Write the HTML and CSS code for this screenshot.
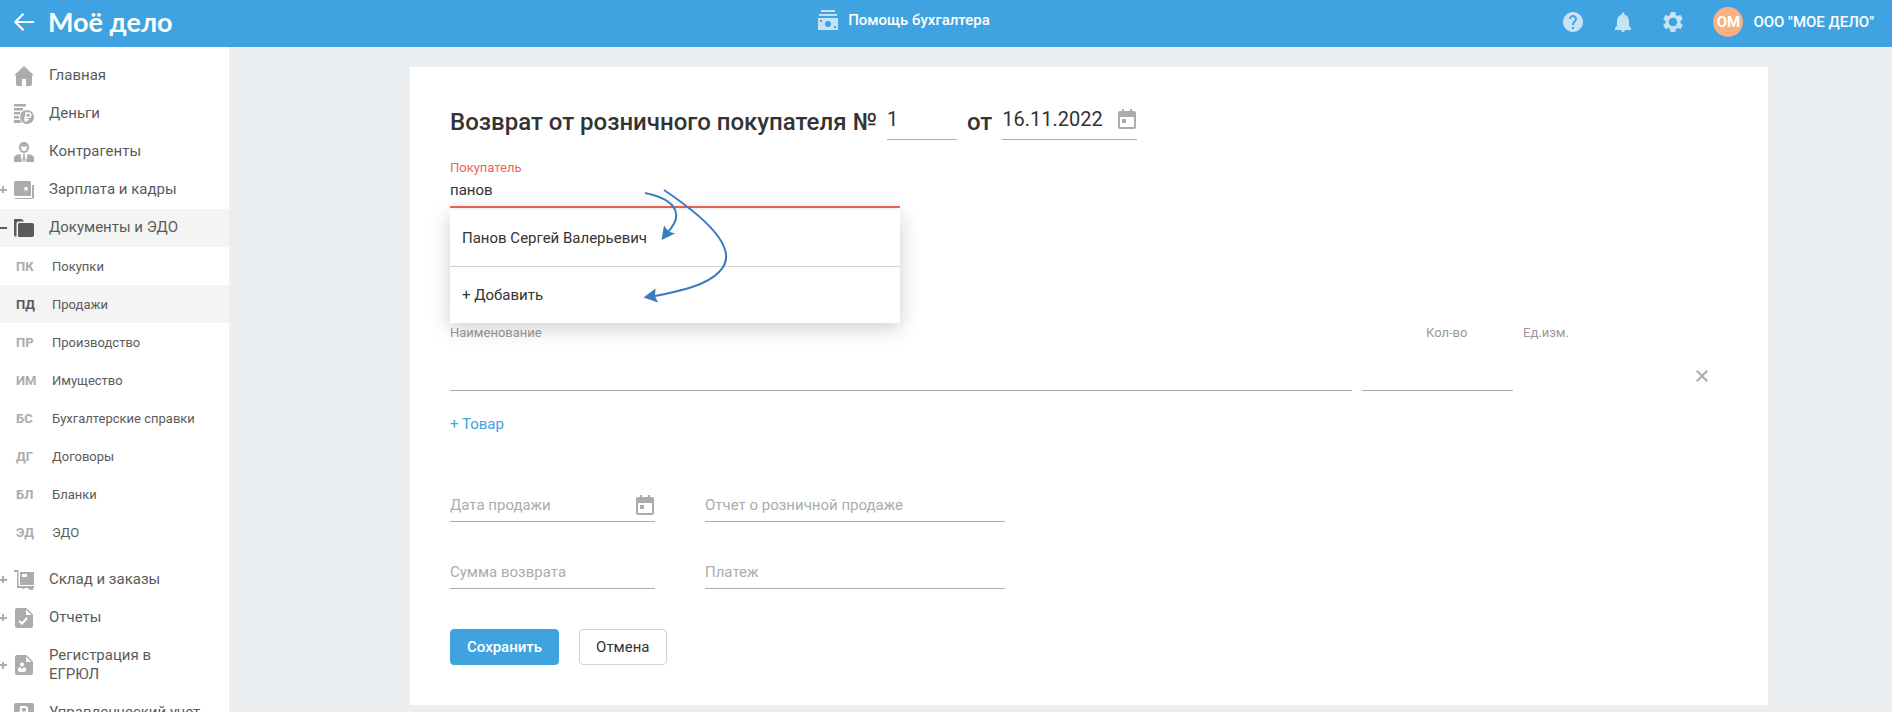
FILE: index.html
```html
<!DOCTYPE html>
<html lang="ru">
<head>
  <meta charset="utf-8">
  <title>Возврат от розничного покупателя</title>
  <link rel="stylesheet" href="styles.css">
</head>
<body>
  <header class="header">
    <a class="back" href="#" aria-label="Назад">
      <svg width="20" height="18" viewBox="0 0 20 18" fill="none" stroke="#fff" stroke-width="2"><path d="M20 9H1M9.500 .7L1.200 9l8.300 8.300"/></svg>
    </a>
    <a class="logo" href="#">Моё дело</a>
    <a class="help" href="#">
      <svg width="20" height="20" viewBox="0 0 20 20"><path fill="#c5e3f5" fill-rule="evenodd" d="M3 0h14v2H3zM1 4h18v2H1zM0 8h20v12H0zM2 10v2h2v-2zM16 16v2h2v-2zM10 11a3 3 0 1 0 0 6a3 3 0 1 0 0-6z"/></svg>
      Помощь бухгалтера
    </a>
    <div class="tools">
      <button class="tool" aria-label="Справка">
        <svg width="20" height="20" viewBox="2 2 20 20"><path d="M12 2C6.480 2 2 6.480 2 12s4.480 10 10 10 10-4.480 10-10S17.520 2 12 2zm1 17h-2v-2h2v2zm2.070-7.750l-.9.920C13.450 12.900 13 13.500 13 15h-2v-.5c0-1.100.450-2.100 1.170-2.830l1.240-1.260c.370-.360.590-.860.590-1.410 0-1.100-.9-2-2-2s-2 .9-2 2H8c0-2.210 1.790-4 4-4s4 1.790 4 4c0 .880-.360 1.680-.930 2.250z"/></svg>
      </button>
      <button class="tool" aria-label="Уведомления">
        <svg width="20" height="20" viewBox="2 2 20 20"><path d="M12 22c1.100 0 2-.9 2-2h-4c0 1.100.9 2 2 2zm6-6v-5c0-3.070-1.630-5.640-4.500-6.320V4c0-.830-.670-1.500-1.500-1.500s-1.500.670-1.500 1.500v.680C7.640 5.360 6 7.920 6 11v5l-2 2v2h16v-2l-2-2z"/></svg>
      </button>
      <button class="tool" aria-label="Настройки">
        <svg width="20" height="20" viewBox="2 2 20 20"><path d="M19.430 12.980c.040-.320.070-.640.070-.980s-.030-.660-.070-.980l2.110-1.650c.190-.150.240-.420.120-.640l-2-3.460c-.120-.220-.390-.3-.610-.220l-2.490 1c-.520-.4-1.080-.730-1.690-.980l-.380-2.650C14.460 2.180 14.250 2 14 2h-4c-.250 0-.460.180-.490.420l-.380 2.650c-.610.250-1.170.590-1.690.980l-2.490-1c-.230-.090-.490 0-.610.220l-2 3.460c-.130.220-.070.490.120.640l2.110 1.650c-.040.320-.070.650-.070.980s.030.660.070.980l-2.110 1.650c-.190.150-.240.420-.120.640l2 3.460c.120.220.390.3.610.220l2.490-1c.520.4 1.080.730 1.690.980l.380 2.650c.030.240.240.420.490.420h4c.250 0 .460-.180.490-.420l.380-2.650c.610-.250 1.170-.590 1.690-.980l2.490 1c.230.090.490 0 .610-.220l2-3.460c.120-.220.070-.490-.120-.640l-2.110-1.650zM12 16.300a4.300 4.300 0 1 1 0-8.600 4.300 4.300 0 0 1 0 8.600z"/></svg>
      </button>
      <a class="account" href="#"><span class="avatar">ОМ</span>ООО "МОЕ ДЕЛО"</a>
    </div>
  </header>

  <div class="page">
    <nav class="sidebar">
      <a class="item" href="#">
        <svg class="icon" viewBox="0 0 20 20"><path d="M10 0L0 9.500h2V18c0 1.200.8 2 2 2h4v-7h4v7h4c1.200 0 2-.8 2-2V9.500h2z"/></svg>
        <span>Главная</span>
      </a>
      <a class="item" href="#">
        <svg class="icon" viewBox="0 0 20 20"><path d="M0 0h12v2.500H0zM0 4h9v2.500H0zM0 8h6.500L5.500 10.500H0zM0 12h5v2.500H0zM0 16h6l1.500 3H0z"/><circle cx="13" cy="13" r="7"/><path fill="none" stroke="#fff" stroke-width="1.500" d="M12 18V9h2.500a2.200 2.200 0 0 1 0 4.500H10M10 15.700h5"/></svg>
        <span>Деньги</span>
      </a>
      <a class="item" href="#">
        <svg class="icon" viewBox="0 0 20 20"><path fill-rule="evenodd" d="M10 0c3 0 5 2 5 5s-2 6-5 6-5-3-5-6 2-5 5-5zM7 4c0 3 1 5 3 5s3-2 3-5c-2 1-4 1-6 0z"/><path d="M0 20v-4c0-2.500 3-3.500 6.500-4L8 20zM20 20v-4c0-2.500-3-3.500-6.500-4L12 20zM8.500 12h3l-.8 2 .8 4-1.500 2-1.500-2 .8-4z"/></svg>
        <span>Контрагенты</span>
      </a>
      <a class="item has-children" href="#">
        <svg class="icon" viewBox="0 0 20 20"><path fill-rule="evenodd" d="M2 1h13c1.200 0 2 .6 2 2v2h-6c-1.200 0-2 .8-2 2v4c0 1.200.8 2 2 2h6v3H2c-1.200 0-2-.6-2-2V3c0-1.400.8-2 2-2zM11 5h6v8h-6c-1.200 0-2-.8-2-2V7c0-1.200.8-2 2-2zM10.500 7v3.500h3V7zM18 5h2v12c0 1.200-.8 2-2 2H2c-.8 0-1.400-.4-1.700-1H18z"/></svg>
        <span>Зарплата и кадры</span>
      </a>
      <a class="item has-children open" href="#">
        <svg class="icon" viewBox="0 0 20 20"><path d="M0 1.500C0 1 .5 1 1 1h6.500l3 2.500H4.500C3 3.500 2.500 4.500 2.500 6v12.500H2C.8 18.500 0 18 0 16.500zM5.500 5H18c1.200 0 2 .8 2 2v10c0 1.200-.8 2-2 2H5.500c-1 0-1.500-.5-1.500-1.500v-11C4 5.500 4.500 5 5.500 5z"/></svg>
        <span>Документы и ЭДО</span>
      </a>
      <div class="submenu">
        <a class="subitem" href="#"><b>ПК</b>Покупки</a>
        <a class="subitem active" href="#"><b>ПД</b>Продажи</a>
        <a class="subitem" href="#"><b>ПР</b>Производство</a>
        <a class="subitem" href="#"><b>ИМ</b>Имущество</a>
        <a class="subitem" href="#"><b>БС</b>Бухгалтерские справки</a>
        <a class="subitem" href="#"><b>ДГ</b>Договоры</a>
        <a class="subitem" href="#"><b>БЛ</b>Бланки</a>
        <a class="subitem" href="#"><b>ЭД</b>ЭДО</a>
      </div>
      <a class="item has-children" href="#">
        <svg class="icon" viewBox="0 0 20 20"><path fill-rule="evenodd" d="M0 0h4.500v16H20v2h-1a1.600 1.600 0 0 1-3 1.500H15L14 18h-3a1.600 1.600 0 0 1-3 0H3V2H0zM6 2h14v13H6zM8 4v3h5V4z"/></svg>
        <span>Склад и заказы</span>
      </a>
      <a class="item has-children" href="#">
        <svg class="icon" viewBox="0 0 20 20"><path fill-rule="evenodd" d="M3 0h9.500L19 6.500V18c0 1.200-.8 2-2 2H3c-1.200 0-2-.8-2-2V2C1 .8 1.800 0 3 0zM12 1.500V7h5.500z"/><path fill="none" stroke="#fff" stroke-width="2" d="M5 13l3 2.500 5-5.500"/></svg>
        <span>Отчеты</span>
      </a>
      <a class="item has-children" href="#">
        <svg class="icon" viewBox="0 0 20 20"><path fill-rule="evenodd" d="M3 0h9.500L19 6.500V18c0 1.200-.8 2-2 2H3c-1.200 0-2-.8-2-2V2C1 .8 1.800 0 3 0zM12 1.500V7h5.500z"/><circle cx="8" cy="9.500" r="2" fill="#fff"/><path fill="#fff" d="M4 13l2-1 2 2 2-2 2 1v2.500c0 1-1.500 1.500-4 1.500s-4-.5-4-1.500z"/></svg>
        <span>Регистрация в ЕГРЮЛ</span>
      </a>
      <a class="item" href="#">
        <svg class="icon" viewBox="0 0 20 20"><rect width="20" height="20" rx="2"/><path fill="none" stroke="#fff" stroke-width="2" d="M7 17V4h3.500a2.800 2.800 0 0 1 0 5.600H4.500M4.500 13H11"/></svg>
        <span>Управленческий учет</span>
      </a>
    </nav>

    <main class="main">
      <form class="card">
        <div class="title-row">
          <h1>Возврат от розничного покупателя №</h1>
          <input class="control number" type="text" value="1" aria-label="Номер документа">
          <h1>от</h1>
          <div class="date-field document-date">
            <input class="control" type="text" value="16.11.2022" aria-label="Дата документа">
            <svg class="calendar" viewBox="0 0 18 20"><path fill-rule="evenodd" d="M4 0h2v2h6V0h2v2h2c1.200 0 2 .8 2 2v14c0 1.200-.8 2-2 2H2c-1.200 0-2-.8-2-2V4c0-1.200.8-2 2-2h2zM2 8v10h14V8zM4 10h4v4H4z"/></svg>
          </div>
        </div>

        <div class="customer">
          <label for="customer">Покупатель</label>
          <input id="customer" type="text" value="панов">
          <div class="dropdown">
            <button type="button">Панов Сергей Валерьевич</button>
            <button type="button">+ Добавить</button>
          </div>
          <svg class="arrows" width="90" height="120" viewBox="640 185 90 120">
            <path class="line" d="M645 193C670 198 688 211 667 233M664 190C716 225 739 253 719 272C707 285 681 291 655 296"/>
            <path class="head" d="M661.500 240l2.500-14.500 4.500 6 6.500 2zM643.500 297.500l12-9-.5 7.500 3 6.500z"/>
          </svg>
        </div>

        <table class="goods">
          <thead>
            <tr>
              <th class="col-name">Наименование</th>
              <th class="col-count">Кол-во</th>
              <th class="col-unit">Ед.изм.</th>
              <th class="col-remove"></th>
            </tr>
          </thead>
          <tbody>
            <tr>
              <td><input type="text" aria-label="Наименование"></td>
              <td><input type="text" aria-label="Кол-во"></td>
              <td></td>
              <td>
                <button class="remove" type="button" aria-label="Удалить">
                  <svg width="12" height="12" viewBox="0 0 12 12" fill="none" stroke="#acacac" stroke-width="2"><path d="M.7.7l10.600 10.600M11.300.7L.7 11.300"/></svg>
                </button>
              </td>
            </tr>
          </tbody>
        </table>
        <a class="add" href="#">+ Товар</a>

        <div class="fields">
          <div class="date-field">
            <input class="control" type="text" placeholder="Дата продажи" aria-label="Дата продажи">
            <svg class="calendar" viewBox="0 0 18 20"><path fill-rule="evenodd" d="M4 0h2v2h6V0h2v2h2c1.200 0 2 .8 2 2v14c0 1.200-.8 2-2 2H2c-1.200 0-2-.8-2-2V4c0-1.200.8-2 2-2h2zM2 8v10h14V8zM4 10h4v4H4z"/></svg>
          </div>
          <input class="control" type="text" placeholder="Отчет о розничной продаже" aria-label="Отчет о розничной продаже">
          <input class="control" type="text" placeholder="Сумма возврата" aria-label="Сумма возврата">
          <input class="control" type="text" placeholder="Платеж" aria-label="Платеж">
        </div>

        <div class="buttons">
          <button class="btn primary" type="submit">Сохранить</button>
          <button class="btn" type="button">Отмена</button>
        </div>
      </form>
    </main>
  </div>
</body>
</html>
```
FILE: styles.css
```css
* { box-sizing: border-box; }
body {
  display: flex;
  flex-direction: column;
  height: 100vh;
  margin: 0;
  overflow: hidden;
  background: #ebeff2;
  color: #333;
  font: 15px/20px Roboto, sans-serif;
}
a { color: inherit; text-decoration: none; }
button, input { font: inherit; color: inherit; }
button { cursor: pointer; }
input { outline: none; }

/* Header */
.header {
  display: grid;
  grid-template-columns: 1fr auto 1fr;
  grid-template-areas: "brand help tools";
  flex: none;
  align-items: center;
  height: 47px;
  padding: 0 18px 3px 14px;
  background: #3ea3e0;
  color: #fff;
}
.back {
  grid-area: brand;
  display: flex;
  width: 20px;
}
.logo {
  grid-area: brand;
  justify-self: start;
  margin-left: 34px;
  font: 700 27px/32px Lato, sans-serif;
}
.help {
  grid-area: help;
  display: flex;
  gap: 10px;
  align-items: center;
  padding: 0 80px 4px 0;
  font-weight: 500;
}
.tools {
  grid-area: tools;
  display: flex;
  gap: 30px;
  align-items: center;
  justify-content: flex-end;
}
.tool {
  display: flex;
  padding: 0;
  border: none;
  background: none;
  fill: #c5e3f5;
}
.account {
  display: flex;
  gap: 10px;
  align-items: center;
  font-weight: 500;
}
.avatar {
  width: 30px;
  border-radius: 50%;
  background: #f8b084;
  font-weight: 700;
  line-height: 30px;
  text-align: center;
}

/* Sidebar */
.page {
  display: flex;
  flex: 1;
  min-height: 0;
}
.sidebar {
  flex: none;
  width: 229px;
  padding-top: 10px;
  overflow: hidden;
  background: #fff;
  color: #5b5b5b;
}
.item {
  position: relative;
  display: flex;
  gap: 15px;
  align-items: center;
  padding: 9px 28px 10px 14px;
  line-height: 19px;
}
.icon {
  flex: none;
  width: 20px;
  height: 20px;
  margin: -1px 0;
  fill: #acacac;
}
.has-children::before {
  content: "";
  position: absolute;
  left: 0;
  width: 7px;
  height: 7px;
  background:
    linear-gradient(#acacac, #acacac) center / 7px 2px no-repeat,
    linear-gradient(#acacac, #acacac) 2px 0 / 2px 7px no-repeat;
}
.open, .active { background: #f4f4f4; }
.open .icon { fill: #5b5b5b; }
.open::before {
  height: 2px;
  background: #5b5b5b;
}
.submenu { padding-bottom: 10px; }
.subitem {
  display: flex;
  padding: 10px 0 8px 16px;
  font-size: 13px;
}
.subitem b {
  width: 36px;
  color: #acacac;
}
.active b { color: #5b5b5b; }

/* Document */
.main {
  flex: 1;
  padding: 20px 124px 7px 181px;
}
.card {
  padding: 39px 40px 40px;
  background: #fff;
}
.title-row {
  display: flex;
  gap: 10px;
  align-items: flex-end;
}
h1 {
  margin: 0;
  padding-bottom: 4px;
  font-size: 24px;
  font-weight: 500;
  line-height: 28px;
}
.control {
  width: 100%;
  height: 28px;
  padding: 0 0 5px;
  border: none;
  border-bottom: 1px solid #acacac;
  border-radius: 0;
  background: none;
}
.control::placeholder { color: #acacac; }
.title-row .control {
  height: 34px;
  padding-bottom: 7px;
  font-size: 20px;
}
.title-row .number { width: 70px; }
.date-field {
  display: flex;
  position: relative;
}
.document-date { width: 135px; }
.calendar {
  position: absolute;
  right: 1px;
  bottom: 7px;
  width: 18px;
  height: 20px;
  fill: #acacac;
}
.document-date .calendar { bottom: 11px; }

.customer {
  position: relative;
  width: 450px;
  margin-top: 20px;
}
.customer label {
  display: block;
  color: #ec6657;
  font-size: 13px;
  line-height: 16px;
}
.customer input {
  display: block;
  width: 100%;
  height: 32px;
  padding: 0 0 2px;
  border: none;
  border-bottom: 2px solid #ec6657;
}
.dropdown {
  position: absolute;
  top: 50px;
  left: 0;
  right: 0;
  background: #fff;
  box-shadow: 0 5px 20px rgba(0,0,0,0.2);
}
.dropdown button {
  display: block;
  width: 100%;
  height: 56px;
  padding: 0 12px;
  border: none;
  background: #fff;
  text-align: left;
}
.dropdown button + button {
  height: 57px;
  border-top: 1px solid #d3d3d3;
}
.arrows {
  position: absolute;
  top: 25px;
  left: 190px;
  pointer-events: none;
}
.line { fill: none; stroke: #3a7cc0; stroke-width: 2; }
.head { fill: #3a7cc0; }

.goods {
  width: 100%;
  margin-top: 117px;
  border-collapse: collapse;
  table-layout: fixed;
}
.goods th {
  padding: 0;
  color: #999;
  font-size: 13px;
  font-weight: 400;
  line-height: 16px;
  text-align: left;
}
.goods .col-count { width: 161px; padding-left: 64px; }
.col-unit { width: 160px; }
.col-remove { width: 45px; }
.goods td { padding: 0 10px 0 0; }
.goods input {
  display: block;
  width: 100%;
  height: 50px;
  border: none;
  border-bottom: 1px solid #acacac;
}
.goods .remove {
  display: flex;
  margin: 20px 0 0 auto;
  padding: 0 10px 0 0;
  border: none;
  background: none;
}
.add {
  display: inline-block;
  margin-top: 23px;
  color: #3ea3e0;
}
.fields {
  display: grid;
  grid-template-columns: 205px 300px;
  gap: 39px 50px;
  margin-top: 60px;
}
.buttons {
  display: flex;
  gap: 20px;
  margin-top: 40px;
}
.btn {
  height: 36px;
  padding: 0 16px;
  border: 1px solid #d3d3d3;
  border-radius: 4px;
  background: #fff;
}
.primary {
  border-color: #3ea3e0;
  background: #3ea3e0;
  color: #fff;
  font-weight: 500;
}
```
